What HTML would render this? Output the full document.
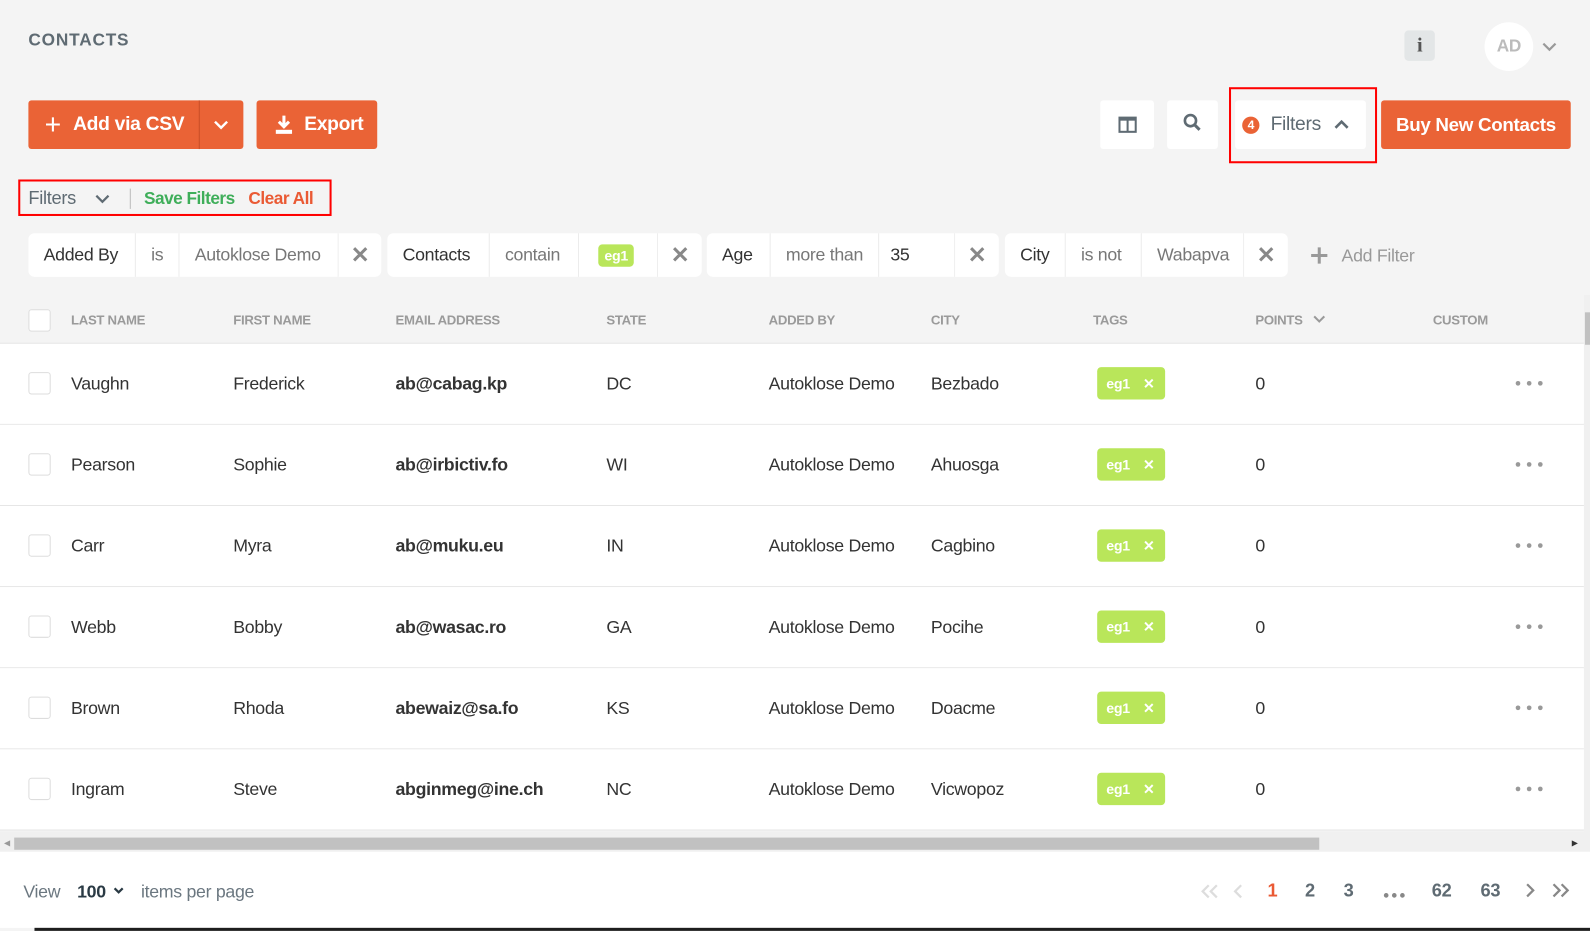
<!DOCTYPE html>
<html><head><meta charset="utf-8"><style>
*{box-sizing:border-box;margin:0;padding:0}
html,body{width:1590px;height:931px;overflow:hidden;background:#f4f4f4}
#w{position:absolute;left:0;top:0;width:1568px;height:918px;transform:scale(1.01403);transform-origin:0 0;font-family:"Liberation Sans",sans-serif;color:#333;letter-spacing:-0.3px}
.a{position:absolute}
.btn{position:absolute;background:#ea6336;color:#fff;font-size:19px;font-weight:bold;border-radius:3px;display:flex;align-items:center}
.wb{position:absolute;background:#fff;border-radius:3px;display:flex;align-items:center;justify-content:center}
.seg{position:absolute;top:230px;height:43px;background:#fff;display:flex;align-items:center;font-size:17.5px;color:#333;padding-left:15px;border-left:1px solid #ececec}
.g{color:#777}
.x{justify-content:center;padding:0;color:#888;font-size:22px;font-weight:bold}
.hd{position:absolute;top:308px;font-size:13px;font-weight:bold;color:#9a9a9a}
.row{position:absolute;left:0;width:1562px;height:80px;background:#fff;border-bottom:1px solid #e6e6e6}
.row div{position:absolute;top:29px;font-size:17.5px;color:#333}
.cb{position:absolute;width:22px;height:22px;border:1px solid #ddd;border-radius:3px;background:#fff}
.row .tag{background:#b9e65a;color:#fff;font-weight:bold;font-size:14px;border-radius:4px;width:67px;height:32px;top:23px;display:flex;align-items:center;padding-left:9px}
.row .dots{top:0;left:1494px}
.pg{position:absolute;top:868px;font-size:18px;font-weight:bold;color:#5f6b73}
</style></head><body><div id="w">
<div class="a" style="left:28px;top:30px;font-size:17px;font-weight:bold;color:#5f6b73;letter-spacing:0.8px">CONTACTS</div>
<div class="a" style="left:1385px;top:30px;width:30px;height:30px;background:#e3e6e7;border-radius:4px;text-align:center;font-family:'Liberation Serif',serif;font-size:20px;line-height:30px;color:#555;font-weight:bold">i</div>
<div class="a" style="left:1464px;top:22px;width:48px;height:48px;border-radius:50%;background:#fff;text-align:center;line-height:48px;font-size:17px;font-weight:bold;color:#bbb">AD</div>
<svg class="a" style="left:1520px;top:40px" width="16" height="12"><path d="M2 3l6 6 6-6" stroke="#999" stroke-width="2.2" fill="none"/></svg>

<div class="btn" style="left:28px;top:99px;width:212px;height:48px"><span style="margin-left:16px;font-size:28px;font-weight:normal;line-height:1">+</span><span style="margin-left:12px">Add via CSV</span>
<span style="position:absolute;left:168px;top:0;width:1px;height:48px;background:#c94e26"></span>
<svg style="position:absolute;left:182px;top:18px" width="16" height="12"><path d="M2 3l6 6 6-6" stroke="#fff" stroke-width="2.4" fill="none"/></svg></div>
<div class="btn" style="left:253px;top:99px;width:119px;height:48px"><svg style="margin-left:18px" width="18" height="20"><path d="M9 1v11M4 7l5 5 5-5" stroke="#fff" stroke-width="3" fill="none"/><rect x="1" y="15" width="16" height="4" fill="#fff"/></svg><span style="margin-left:11px">Export</span></div>

<div class="wb" style="left:1085px;top:99px;width:53px;height:48px"><svg width="20" height="18"><rect x="1" y="1" width="18" height="16" fill="#5f6b73"/><rect x="3" y="5" width="6" height="10" fill="#fff"/><rect x="11" y="5" width="6" height="10" fill="#fff"/></svg></div>
<div class="wb" style="left:1151px;top:99px;width:50px;height:48px"><svg width="20" height="20" style="margin-top:-4px"><circle cx="8" cy="8" r="5.5" stroke="#5f6b73" stroke-width="2.6" fill="none"/><path d="M12 12l5 5" stroke="#5f6b73" stroke-width="3"/></svg></div>
<div class="wb" style="left:1218px;top:99px;width:129px;height:48px;justify-content:flex-start"><span style="margin-left:7px;width:17px;height:17px;border-radius:50%;background:#ea6336;color:#fff;font-size:12px;text-align:center;line-height:17px;font-weight:bold">4</span><span style="margin-left:11px;font-size:19px;color:#5f6b73">Filters</span><svg style="margin-left:12px" width="16" height="12"><path d="M2 9l6-6 6 6" stroke="#5f6b73" stroke-width="2.6" fill="none"/></svg></div>
<div class="a" style="left:1212px;top:86px;width:146px;height:75px;border:2px solid #f00"></div>
<div class="btn" style="left:1362px;top:99px;width:187px;height:48px;justify-content:center;font-size:18.5px">Buy New Contacts</div>

<div class="a" style="left:18px;top:177px;width:309px;height:36px;border:2px solid #f00"></div>
<div class="a" style="left:28px;top:185px;font-size:18px;color:#5f6b73">Filters</div>
<svg class="a" style="left:93px;top:190px" width="16" height="12"><path d="M2 3l6 6 6-6" stroke="#5f6b73" stroke-width="2.2" fill="none"/></svg>
<div class="a" style="left:128px;top:186px;width:1px;height:20px;background:#bbb"></div>
<div class="a" style="left:142px;top:186px;font-size:17px;color:#3fae5a;font-weight:bold;letter-spacing:-0.5px">Save Filters</div>
<div class="a" style="left:245px;top:186px;font-size:17px;color:#ea5a34;font-weight:bold;letter-spacing:-0.5px">Clear All</div>

<div class="seg" style="left:28px;width:105px;border:0;border-radius:6px 0 0 6px">Added By</div>
<div class="seg g" style="left:133px;width:43px">is</div>
<div class="seg g" style="left:176px;width:157px">Autoklose Demo</div>
<div class="seg x" style="left:333px;width:43px;border-radius:0 6px 6px 0">✕</div>
<div class="seg" style="left:382px;width:100px;border:0;border-radius:6px 0 0 6px">Contacts</div>
<div class="seg g" style="left:482px;width:88px">contain</div>
<div class="seg" style="left:570px;width:78px;padding-left:19px"><span style="background:#b9e65a;color:#fff;font-size:14px;font-weight:bold;border-radius:4px;padding:3px 6px">eg1</span></div>
<div class="seg x" style="left:648px;width:44px;border-radius:0 6px 6px 0">✕</div>
<div class="seg" style="left:697px;width:62px;border:0;border-radius:6px 0 0 6px">Age</div>
<div class="seg g" style="left:759px;width:107px">more than</div>
<div class="seg" style="left:866px;width:75px;padding-left:11px">35</div>
<div class="seg x" style="left:941px;width:44px;border-radius:0 6px 6px 0">✕</div>
<div class="seg" style="left:991px;width:59px;border:0;border-radius:6px 0 0 6px">City</div>
<div class="seg g" style="left:1050px;width:75px">is not</div>
<div class="seg g" style="left:1125px;width:101px">Wabapva</div>
<div class="seg x" style="left:1226px;width:44px;border-radius:0 6px 6px 0">✕</div>
<svg class="a" style="left:1292px;top:243px" width="18" height="18"><path d="M9 1v16M1 9h16" stroke="#999" stroke-width="3"/></svg>
<div class="a" style="left:1323px;top:242px;font-size:17.5px;color:#999">Add Filter</div>

<div class="a" style="left:0;top:338px;width:1562px;height:1px;background:#e4e4e4"></div>
<div class="cb" style="left:28px;top:305px"></div>
<div class="hd" style="left:70px">LAST NAME</div>
<div class="hd" style="left:230px">FIRST NAME</div>
<div class="hd" style="left:390px">EMAIL ADDRESS</div>
<div class="hd" style="left:598px">STATE</div>
<div class="hd" style="left:758px">ADDED BY</div>
<div class="hd" style="left:918px">CITY</div>
<div class="hd" style="left:1078px">TAGS</div>
<div class="hd" style="left:1238px">POINTS</div>
<svg class="a" style="left:1294px;top:310px" width="14" height="10"><path d="M2 2l5 5 5-5" stroke="#9a9a9a" stroke-width="2" fill="none"/></svg>
<div class="hd" style="left:1413px">CUSTOM</div>

<div class="row" style="top:339px"><span class="cb" style="left:28px;top:28px"></span><div style="left:70px">Vaughn</div><div style="left:230px">Frederick</div><div style="left:390px;font-weight:bold">ab@cabag.kp</div><div style="left:598px">DC</div><div style="left:758px">Autoklose Demo</div><div style="left:918px">Bezbado</div><div class="tag" style="left:1082px">eg1<span style="margin-left:13px">✕</span></div><div style="left:1238px">0</div><svg class="a" style="left:1494px;top:36px" width="28" height="6"><circle cx="3" cy="3" r="2.3" fill="#999"/><circle cx="14" cy="3" r="2.3" fill="#999"/><circle cx="25" cy="3" r="2.3" fill="#999"/></svg></div>
<div class="row" style="top:419px"><span class="cb" style="left:28px;top:28px"></span><div style="left:70px">Pearson</div><div style="left:230px">Sophie</div><div style="left:390px;font-weight:bold">ab@irbictiv.fo</div><div style="left:598px">WI</div><div style="left:758px">Autoklose Demo</div><div style="left:918px">Ahuosga</div><div class="tag" style="left:1082px">eg1<span style="margin-left:13px">✕</span></div><div style="left:1238px">0</div><svg class="a" style="left:1494px;top:36px" width="28" height="6"><circle cx="3" cy="3" r="2.3" fill="#999"/><circle cx="14" cy="3" r="2.3" fill="#999"/><circle cx="25" cy="3" r="2.3" fill="#999"/></svg></div>
<div class="row" style="top:499px"><span class="cb" style="left:28px;top:28px"></span><div style="left:70px">Carr</div><div style="left:230px">Myra</div><div style="left:390px;font-weight:bold">ab@muku.eu</div><div style="left:598px">IN</div><div style="left:758px">Autoklose Demo</div><div style="left:918px">Cagbino</div><div class="tag" style="left:1082px">eg1<span style="margin-left:13px">✕</span></div><div style="left:1238px">0</div><svg class="a" style="left:1494px;top:36px" width="28" height="6"><circle cx="3" cy="3" r="2.3" fill="#999"/><circle cx="14" cy="3" r="2.3" fill="#999"/><circle cx="25" cy="3" r="2.3" fill="#999"/></svg></div>
<div class="row" style="top:579px"><span class="cb" style="left:28px;top:28px"></span><div style="left:70px">Webb</div><div style="left:230px">Bobby</div><div style="left:390px;font-weight:bold">ab@wasac.ro</div><div style="left:598px">GA</div><div style="left:758px">Autoklose Demo</div><div style="left:918px">Pocihe</div><div class="tag" style="left:1082px">eg1<span style="margin-left:13px">✕</span></div><div style="left:1238px">0</div><svg class="a" style="left:1494px;top:36px" width="28" height="6"><circle cx="3" cy="3" r="2.3" fill="#999"/><circle cx="14" cy="3" r="2.3" fill="#999"/><circle cx="25" cy="3" r="2.3" fill="#999"/></svg></div>
<div class="row" style="top:659px"><span class="cb" style="left:28px;top:28px"></span><div style="left:70px">Brown</div><div style="left:230px">Rhoda</div><div style="left:390px;font-weight:bold">abewaiz@sa.fo</div><div style="left:598px">KS</div><div style="left:758px">Autoklose Demo</div><div style="left:918px">Doacme</div><div class="tag" style="left:1082px">eg1<span style="margin-left:13px">✕</span></div><div style="left:1238px">0</div><svg class="a" style="left:1494px;top:36px" width="28" height="6"><circle cx="3" cy="3" r="2.3" fill="#999"/><circle cx="14" cy="3" r="2.3" fill="#999"/><circle cx="25" cy="3" r="2.3" fill="#999"/></svg></div>
<div class="row" style="top:739px"><span class="cb" style="left:28px;top:28px"></span><div style="left:70px">Ingram</div><div style="left:230px">Steve</div><div style="left:390px;font-weight:bold">abginmeg@ine.ch</div><div style="left:598px">NC</div><div style="left:758px">Autoklose Demo</div><div style="left:918px">Vicwopoz</div><div class="tag" style="left:1082px">eg1<span style="margin-left:13px">✕</span></div><div style="left:1238px">0</div><svg class="a" style="left:1494px;top:36px" width="28" height="6"><circle cx="3" cy="3" r="2.3" fill="#999"/><circle cx="14" cy="3" r="2.3" fill="#999"/><circle cx="25" cy="3" r="2.3" fill="#999"/></svg></div>

<div class="a" style="left:1562px;top:291px;width:6px;height:530px;background:#f0f0f0"></div>
<div class="a" style="left:1563px;top:308px;width:5px;height:32px;background:#c1c1c1"></div>
<div class="a" style="left:0;top:820px;width:1568px;height:20px;background:#f0f0f0"></div>
<div class="a" style="left:14px;top:826px;width:1287px;height:12px;background:#c1c1c1"></div>
<div class="a" style="left:4px;top:827px;font-size:8px;color:#999">◀</div>
<div class="a" style="left:1550px;top:827px;font-size:8px;color:#333">▶</div>
<div class="a" style="left:0;top:840px;width:1568px;height:75px;background:#fff"></div>
<div class="a" style="left:34px;top:915px;width:1534px;height:3px;background:#1e1e1e"></div>

<div class="a" style="left:23px;top:869px;font-size:17.5px;color:#6b7780">View</div>
<div class="a" style="left:76px;top:869px;font-size:17.5px;color:#2a3a44;font-weight:bold">100</div>
<svg class="a" style="left:111px;top:874px" width="12" height="9"><path d="M2 2l4 4 4-4" stroke="#2a3a44" stroke-width="2.2" fill="none"/></svg>
<div class="a" style="left:139px;top:869px;font-size:17.5px;color:#6b7780">items per page</div>

<svg class="a" style="left:1183px;top:871px" width="20" height="16"><path d="M9 2L3 8l6 6M17 2l-6 6 6 6" stroke="#ddd" stroke-width="2.2" fill="none"/></svg>
<svg class="a" style="left:1215px;top:871px" width="12" height="16"><path d="M9 2L3 8l6 6" stroke="#ddd" stroke-width="2.2" fill="none"/></svg>
<div class="pg" style="left:1250px;color:#ea5a34">1</div>
<div class="pg" style="left:1287px">2</div>
<div class="pg" style="left:1325px">3</div>
<svg class="a" style="left:1364px;top:880px" width="22" height="6"><circle cx="3" cy="3" r="2.3" fill="#888"/><circle cx="11" cy="3" r="2.3" fill="#888"/><circle cx="19" cy="3" r="2.3" fill="#888"/></svg>
<div class="pg" style="left:1412px">62</div>
<div class="pg" style="left:1460px">63</div>
<svg class="a" style="left:1503px;top:870px" width="12" height="16"><path d="M3 2l6 6-6 6" stroke="#888" stroke-width="2.2" fill="none"/></svg>
<svg class="a" style="left:1529px;top:870px" width="20" height="16"><path d="M3 2l6 6-6 6M11 2l6 6-6 6" stroke="#888" stroke-width="2.2" fill="none"/></svg>
</div></body></html>
